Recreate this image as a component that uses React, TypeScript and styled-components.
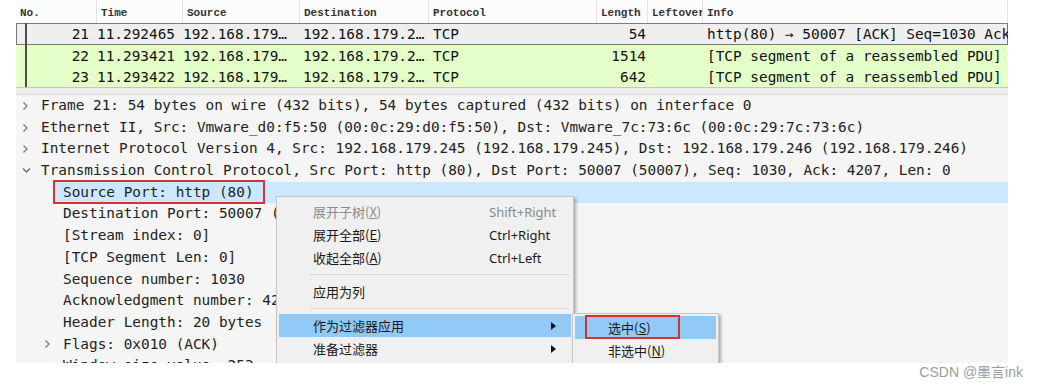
import styled, { createGlobalStyle } from "styled-components";

const GlobalStyle = createGlobalStyle`
  html, body {
    margin: 0;
    padding: 0;
    background: #ffffff;
  }
  body {
    font-family: "DejaVu Sans Mono", monospace;
  }
`;

const COLS = "81px 86px 117px 129px 168px 51px 55px 305px";

const Page = styled.div`
  width: 1039px;
  height: 388px;
  display: flex;
  flex-direction: column;
  background: #ffffff;
  overflow: hidden;
`;

const Shot = styled.div`
  position: relative;
  width: 992px;
  height: 363px;
  margin-left: 16px;
  overflow: hidden;
  display: flex;
  flex-direction: column;
`;

const HeaderRow = styled.div`
  display: grid;
  grid-template-columns: ${COLS};
  height: 23px;
  flex: none;
  background: #fcfcfc;
`;

const HeaderCell = styled.div`
  display: flex;
  align-items: center;
  padding: 3px 0 0 4px;
  box-sizing: border-box;
  border-right: 1px solid #e2e2e2;
  font-family: "Liberation Mono", monospace;
  font-weight: bold;
  font-size: 11px;
  color: #333333;
  white-space: nowrap;
  overflow: hidden;
`;

const PacketRow = styled.div<{ $bg: string; $current?: boolean }>`
  display: grid;
  grid-template-columns: ${COLS};
  height: ${(p) => (p.$current ? "22px" : "21px")};
  flex: none;
  background: ${(p) => p.$bg};
  box-shadow: ${(p) => (p.$current ? "inset 0 0 0 1px #7a7a7a" : "none")};
  font-size: 14.4px;
  color: #111111;
`;

const Cell = styled.div<{ $right?: boolean; $pad?: number }>`
  display: flex;
  align-items: center;
  justify-content: ${(p) => (p.$right ? "flex-end" : "flex-start")};
  padding: ${(p) => (p.$right ? `0 ${p.$pad ?? 0}px 0 0` : `0 0 0 ${p.$pad ?? 0}px`)};
  white-space: nowrap;
  overflow: hidden;
`;

const NoCell = styled(Cell)`
  background: linear-gradient(#4d4d4d, #4d4d4d) 9px 0 / 2px 100% no-repeat;
`;

const Splitter = styled.div`
  height: 8px;
  flex: none;
  box-sizing: border-box;
  border-top: 1px solid #c4c4c4;
  border-bottom: 1px solid #dddddd;
  background: #ebebeb;
`;

const DetailPane = styled.div`
  flex: 1;
  background: #f5f5f5;
  font-size: 14.4px;
  color: #222222;
`;

const DetailRow = styled.div<{ $level: number }>`
  display: flex;
  height: 21.7px;
  line-height: 21.7px;
  padding-left: ${(p) => p.$level * 22}px;
  white-space: nowrap;
`;

const Toggle = styled.span`
  width: 17px;
  flex: none;
  display: flex;
  align-items: center;
  padding-left: 6px;
  box-sizing: border-box;
`;

const Label = styled.span<{ $selected?: boolean }>`
  position: relative;
  flex: 1;
  padding-left: 8px;
  background: ${(p) => (p.$selected ? "#cce8ff" : "transparent")};
`;

const Mark = styled.span<{ $w: number; $h: number; $l: number; $t: number }>`
  position: absolute;
  left: ${(p) => p.$l}px;
  top: ${(p) => p.$t}px;
  width: ${(p) => p.$w}px;
  height: ${(p) => p.$h}px;
  box-sizing: border-box;
  border: 2px solid #d7322f;
  pointer-events: none;
`;

const Menu = styled.div<{ $left: number; $top: number; $width: number }>`
  position: absolute;
  left: ${(p) => p.$left}px;
  top: ${(p) => p.$top}px;
  width: ${(p) => p.$width}px;
  box-sizing: border-box;
  padding: 3px 2px 4px;
  background: #f0f0f0;
  border: 1px solid #c6c6c6;
  box-shadow: 2px 2px 3px rgba(0, 0, 0, 0.3);
  font-family: "Noto Sans CJK SC", "Noto Sans", sans-serif;
  font-size: 13px;
  color: #1a1a1a;
`;

const SubMenu = styled(Menu)`
  padding: 2px 2px 4px;
`;

const MenuItem = styled.div<{ $active?: boolean; $disabled?: boolean }>`
  position: relative;
  display: grid;
  grid-template-columns: 176px 1fr 20px;
  align-items: center;
  height: 23px;
  padding-left: 34px;
  background: ${(p) => (p.$active ? "#91c9f7" : "transparent")};
  color: ${(p) => (p.$disabled ? "#8a8a8a" : "#1a1a1a")};
  white-space: nowrap;
`;

const SubItem = styled(MenuItem)`
  padding-left: 33px;
  grid-template-columns: 1fr;
`;

const Shortcut = styled.span`
  font-family: "Noto Sans", sans-serif;
  font-size: 13px;
`;

const Separator = styled.div`
  height: 11px;
  display: flex;
  align-items: center;
  margin: 0 2px 0 31px;
  &::after {
    content: "";
    flex: 1;
    border-top: 1px solid #d6d6d6;
  }
`;

const Footer = styled.div`
  height: 25px;
  display: flex;
  justify-content: flex-end;
  padding-right: 16px;
  line-height: 18px;
  font-family: "Liberation Sans", "Noto Sans CJK SC", sans-serif;
  font-size: 14px;
  color: #9c9c9c;
`;

const ChevronRight = () => (
  <svg width="7" height="10" viewBox="0 0 7 10">
    <path d="M1.5 1.5 L5 5 L1.5 8.5" fill="none" stroke="#7a7a7a" strokeWidth="1.3" />
  </svg>
);

const ChevronDown = () => (
  <svg width="9" height="7" viewBox="0 0 9 7">
    <path d="M1 1.5 L4.5 5 L8 1.5" fill="none" stroke="#6a6a6a" strokeWidth="1.3" />
  </svg>
);

const SubArrow = () => (
  <svg width="5" height="8" viewBox="0 0 5 8">
    <polygon points="0,0 5,4 0,8" fill="#111111" />
  </svg>
);

const packets = [
  {
    no: 21,
    time: "11.292465",
    len: 54,
    info: "http(80) → 50007 [ACK] Seq=1030 Ack=4207 Win=253 Len=0",
    bg: "#efefef",
    current: true,
  },
  { no: 22, time: "11.293421", len: 1514, info: "[TCP segment of a reassembled PDU]", bg: "#e4ffc7" },
  { no: 23, time: "11.293422", len: 642, info: "[TCP segment of a reassembled PDU]", bg: "#e4ffc7" },
];

type Line = { level: number; toggle?: "open" | "closed"; text: string; selected?: boolean };

const details: Line[] = [
  { level: 0, toggle: "closed", text: "Frame 21: 54 bytes on wire (432 bits), 54 bytes captured (432 bits) on interface 0" },
  { level: 0, toggle: "closed", text: "Ethernet II, Src: Vmware_d0:f5:50 (00:0c:29:d0:f5:50), Dst: Vmware_7c:73:6c (00:0c:29:7c:73:6c)" },
  { level: 0, toggle: "closed", text: "Internet Protocol Version 4, Src: 192.168.179.245 (192.168.179.245), Dst: 192.168.179.246 (192.168.179.246)" },
  { level: 0, toggle: "open", text: "Transmission Control Protocol, Src Port: http (80), Dst Port: 50007 (50007), Seq: 1030, Ack: 4207, Len: 0" },
  { level: 1, text: "Source Port: http (80)", selected: true },
  { level: 1, text: "Destination Port: 50007 (50007)" },
  { level: 1, text: "[Stream index: 0]" },
  { level: 1, text: "[TCP Segment Len: 0]" },
  { level: 1, text: "Sequence number: 1030" },
  { level: 1, text: "Acknowledgment number: 4207" },
  { level: 1, text: "Header Length: 20 bytes" },
  { level: 1, toggle: "closed", text: "Flags: 0x010 (ACK)" },
  { level: 1, text: "Window size value: 253" },
];

const headers = ["No.", "Time", "Source", "Destination", "Protocol", "Length", "Leftover", "Info"];

const App = () => {
  return (
    <Page>
      <GlobalStyle />
      <Shot>
        <HeaderRow>
          {headers.map((h) => (
            <HeaderCell key={h}>{h}</HeaderCell>
          ))}
        </HeaderRow>
        {packets.map((p) => (
          <PacketRow key={p.no} $bg={p.bg} $current={p.current}>
            <NoCell $right $pad={8}>{p.no}</NoCell>
            <Cell>{p.time}</Cell>
            <Cell>192.168.179…</Cell>
            <Cell $pad={3}>192.168.179.2…</Cell>
            <Cell $pad={4}>TCP</Cell>
            <Cell $right $pad={2}>{p.len}</Cell>
            <Cell />
            <Cell $pad={4}>{p.info}</Cell>
          </PacketRow>
        ))}
        <Splitter />
        <DetailPane>
          {details.map((d) => (
            <DetailRow key={d.text} $level={d.level}>
              <Toggle>
                {d.toggle === "closed" && <ChevronRight />}
                {d.toggle === "open" && <ChevronDown />}
              </Toggle>
              <Label $selected={d.selected}>
                {d.text}
                {d.selected && <Mark $l={-2} $t={-2} $w={212} $h={24} />}
              </Label>
            </DetailRow>
          ))}
        </DetailPane>

        <Menu $left={260} $top={196} $width={298}>
          <MenuItem $disabled>
            <span>展开子树(<u>X</u>)</span>
            <Shortcut>Shift+Right</Shortcut>
          </MenuItem>
          <MenuItem>
            <span>展开全部(<u>E</u>)</span>
            <Shortcut>Ctrl+Right</Shortcut>
          </MenuItem>
          <MenuItem>
            <span>收起全部(<u>A</u>)</span>
            <Shortcut>Ctrl+Left</Shortcut>
          </MenuItem>
          <Separator />
          <MenuItem>
            <span>应用为列</span>
          </MenuItem>
          <Separator />
          <MenuItem $active>
            <span>作为过滤器应用</span>
            <span />
            <SubArrow />
          </MenuItem>
          <MenuItem>
            <span>准备过滤器</span>
            <span />
            <SubArrow />
          </MenuItem>
        </Menu>

        <SubMenu $left={556} $top={313} $width={147}>
          <SubItem $active>
            <span>选中(<u>S</u>)</span>
            <Mark $l={10} $t={-1} $w={95} $h={24} />
          </SubItem>
          <SubItem>
            <span>非选中(<u>N</u>)</span>
          </SubItem>
        </SubMenu>
      </Shot>
      <Footer>CSDN @墨言ink</Footer>
    </Page>
  );
};

export default App;
